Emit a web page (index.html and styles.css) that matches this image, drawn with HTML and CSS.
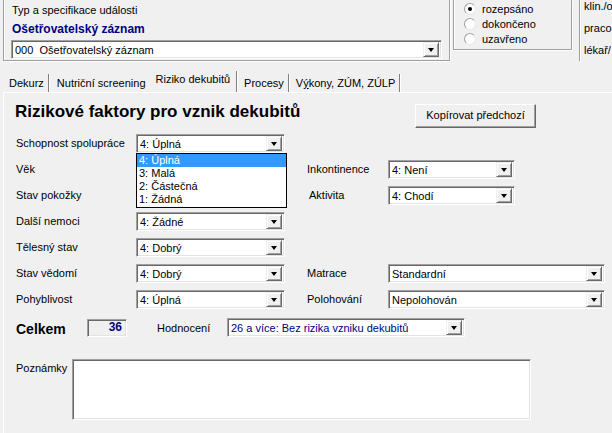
FILE: index.html
```html
<!DOCTYPE html>
<html>
<head>
<meta charset="utf-8">
<link rel="stylesheet" href="styles.css">
</head>
<body>
<div class="top">
  <div class="typ">
    <div class="typ-label">Typ a specifikace události</div>
    <div class="typ-title">Ošetřovatelský záznam</div>
    <div class="combo typ-combo"><span class="val">000&nbsp; Ošetřovatelský záznam</span><span class="dbtn"></span></div>
  </div>
  <div class="vsep"></div>
  <div class="state">
    <div class="radios">
      <div class="radio"><span class="circle on"></span>rozepsáno</div>
      <div class="radio"><span class="circle"></span>dokončeno</div>
      <div class="radio"><span class="circle"></span>uzavřeno</div>
    </div>
  </div>
  <div class="vsep"></div>
  <div class="meta">
    <div class="m1">klin./o</div>
    <div class="m2">praco</div>
    <div class="m3">lékař/</div>
  </div>
</div>

<div class="tabs">
  <div class="tab t1">Dekurz</div>
  <div class="tab t2">Nutriční screening</div>
  <div class="tab active">Riziko dekubitů</div>
  <div class="tab t4">Procesy</div>
  <div class="tab t5">V<u>ý</u>kony, ZÚM, ZÚLP</div>
</div>

<div class="panel">
  <div class="head">
    <h1>Rizikové faktory pro vznik dekubitů</h1>
    <div class="button">Kopírovat předchozí</div>
  </div>

  <div class="rows">
    <div class="row">
      <div class="lab">Schopnost spolupráce</div>
      <div class="combo w147 open"><span class="val">4: Úplná</span><span class="dbtn"></span>
        <div class="list">
          <div class="item sel">4: Úplná</div>
          <div class="item">3: Malá</div>
          <div class="item">2: Částečná</div>
          <div class="item">1: Žádná</div>
        </div>
      </div>
    </div>
    <div class="row">
      <div class="lab">Věk</div>
      <div class="combo w147 under"><span class="dbtn"></span></div>
      <div class="rlab">Inkontinence</div>
      <div class="combo w127"><span class="val">4: Není</span><span class="dbtn"></span></div>
    </div>
    <div class="row">
      <div class="lab">Stav pokožky</div>
      <div class="combo w147 under"><span class="dbtn"></span></div>
      <div class="rlab ind">Aktivita</div>
      <div class="combo w127"><span class="val">4: Chodí</span><span class="dbtn"></span></div>
    </div>
    <div class="row">
      <div class="lab">Další nemoci</div>
      <div class="combo w147"><span class="val">4: Žádné</span><span class="dbtn"></span></div>
    </div>
    <div class="row">
      <div class="lab">Tělesný stav</div>
      <div class="combo w147"><span class="val">4: Dobrý</span><span class="dbtn"></span></div>
    </div>
    <div class="row">
      <div class="lab">Stav vědomí</div>
      <div class="combo w147"><span class="val">4: Dobrý</span><span class="dbtn"></span></div>
      <div class="rlab">Matrace</div>
      <div class="combo w216"><span class="val">Standardní</span><span class="dbtn"></span></div>
    </div>
    <div class="row">
      <div class="lab">Pohyblivost</div>
      <div class="combo w147"><span class="val">4: Úplná</span><span class="dbtn"></span></div>
      <div class="rlab">Polohování</div>
      <div class="combo w216"><span class="val">Nepolohován</span><span class="dbtn"></span></div>
    </div>
  </div>

  <div class="total">
    <div class="celkem">Celkem</div>
    <div class="score">36</div>
    <div class="hlab">Hodnocení</div>
    <div class="combo w237 navy"><span class="val">26 a více: Bez rizika vzniku dekubitů</span><span class="dbtn"></span></div>
  </div>

  <div class="notes">
    <div class="nlab">Poznámky</div>
    <div class="memo"></div>
  </div>
</div>
</body>
</html>
```

FILE: styles.css
```css
* { box-sizing: border-box; }
html, body {
  margin: 0;
  padding: 0;
  width: 612px;
  height: 433px;
  overflow: hidden;
  background: #f0f0f0;
  font-family: "Liberation Sans", Arial, sans-serif;
  font-size: 11px;
  color: #000;
}

/* ---------- top area ---------- */
.top {
  display: flex;
  height: 62px;
}
.typ {
  flex: none;
  width: 446px;
  margin-left: 3px;
  height: 61px;
  border-left: 1px solid #a0a0a0;
  border-bottom: 1px solid #a0a0a0;
  box-shadow: 1px 1px 0 #fff, inset 1px 0 0 #fff;
  padding: 3px 0 0 8px;
}
.typ-label { height: 14px; line-height: 14px; }
.typ-title {
  font-weight: bold;
  font-size: 12px;
  color: #000080;
  height: 21px;
  line-height: 20px;
  margin-top: 2px;
}
.typ-combo { width: 431px; height: 20px; margin-left: -1px; }

.vsep {
  width: 2px;
  height: 61px;
  border-left: 1px solid #a0a0a0;
  border-right: 1px solid #fff;
  flex: none;
}
.state {
  flex: none;
  width: 128px;
  padding-left: 2px;
}
.radios {
  width: 119px;
  height: 50px;
  border: 1px solid #a0a0a0;
  border-top: none;
  box-shadow: 1px 1px 0 #fff, inset 1px 0 0 #fff;
  padding: 1px 0 0 10px;
}
.radio {
  height: 15px;
  display: flex;
  align-items: center;
  gap: 6px;
}
.circle {
  width: 12px;
  height: 12px;
  border-radius: 50%;
  background: #fff;
  border: 1px solid #a0a0a0;
  border-right-color: #e8e8e8;
  border-bottom-color: #e8e8e8;
  position: relative;
  flex: none;
}
.circle.on::after {
  content: "";
  position: absolute;
  left: 3px;
  top: 3px;
  width: 4px;
  height: 4px;
  border-radius: 50%;
  background: #000;
}
.meta {
  flex: 1;
  min-width: 0;
  padding-left: 3px;
  white-space: nowrap;
}
.meta .m1 { line-height: 12px; margin-top: 0; }
.meta .m2 { margin-top: 10px; }
.meta .m3 { margin-top: 10px; }

/* ---------- tabs ---------- */
.tabs {
  display: flex;
  margin-top: 9px;
  height: 21px;
  padding-left: 3px;
}
.tab {
  padding: 3px 4px 0 6px;
  height: 18px;
  border-right: 1px solid #808080;
  box-shadow: 1px 0 0 #fff;
  margin-top: 3px;
  white-space: nowrap;
}
.t1 { margin-right: 2px; }
.t2 { border-right: none; box-shadow: none; padding-right: 4px; }
.tab.active {
  padding: 2px 6px 0 6px;
  margin-top: 0;
  height: 21px;
  margin-right: 1px;
}
.t4 { margin-right: 1px; }
.tab u { text-decoration: underline; }

/* ---------- panel ---------- */
.panel {
  margin-left: 3px;
  height: 342px;
  border-top: 1px solid #fff;
  border-left: 1px solid #fff;
  border-bottom: 1px solid #fff;
  padding-left: 12px;
}
.head {
  display: flex;
  align-items: flex-start;
  height: 37px;
}
h1 {
  margin: 9px 0 0 -1px;
  font-size: 17px;
  line-height: 20px;
  font-weight: bold;
  width: 400px;
}
.button {
  margin-top: 11px;
  width: 121px;
  height: 24px;
  line-height: 21px;
  text-align: center;
  background: #f0f0f0;
  border: 1px solid #fff;
  border-right-color: #696969;
  border-bottom-color: #696969;
  box-shadow: inset -1px -1px 0 #a0a0a0;
}

.rows { display: flex; flex-direction: column; }
.row {
  display: flex;
  align-items: center;
  height: 26px;
}
.lab { width: 120px; flex: none; }
.rlab { width: 81px; margin-left: 22px; flex: none; }
.rlab.ind { padding-left: 2px; }

/* combo box */
.combo {
  position: relative;
  display: flex;
  align-items: center;
  height: 19px;
  background: #fff;
  border: 1px solid #a0a0a0;
  border-right-color: #fff;
  border-bottom-color: #fff;
  box-shadow: inset 1px 1px 0 #696969, inset -1px -1px 0 #e3e3e3;
  padding: 0 2px 0 3px;
  flex: none;
}
.combo .val { flex: 1; white-space: nowrap; overflow: hidden; padding-top: 1px; }
.dbtn {
  margin-left: auto;
  width: 16px;
  height: 15px;
  background: #f0f0f0;
  border: 1px solid #f0f0f0;
  border-right-color: #696969;
  border-bottom-color: #696969;
  box-shadow: inset 1px 1px 0 #fff, inset -1px -1px 0 #a0a0a0;
  position: relative;
  flex: none;
}
.dbtn::after {
  content: "";
  position: absolute;
  left: 4px;
  top: 5px;
  border-left: 3.5px solid transparent;
  border-right: 3.5px solid transparent;
  border-top: 4px solid #000;
}
.w147 { width: 149px; }
.w127 { width: 127px; }
.w216 { width: 217px; }
.w237 { width: 238px; }
.navy .val { color: #000080; }

.list {
  position: absolute;
  left: -1px;
  top: 18px;
  width: 151px;
  background: #fff;
  border: 1px solid #000;
  z-index: 5;
  padding-bottom: 1px;
}
.item {
  height: 13px;
  line-height: 13px;
  padding-left: 2px;
}
.item.sel { background: #3399ff; color: #fff; }

/* ---------- total ---------- */
.total {
  display: flex;
  align-items: center;
  height: 19px;
  margin-top: 6px;
}
.celkem {
  font-weight: bold;
  font-size: 14px;
  width: 71px;
  flex: none;
  padding-top: 3px;
}
.score {
  width: 40px;
  height: 18px;
  border: 1px solid #a0a0a0;
  border-right-color: #fff;
  border-bottom-color: #fff;
  box-shadow: inset 1px 1px 0 #696969, inset -1px -1px 0 #e3e3e3;
  text-align: right;
  padding-right: 4px;
  font-weight: bold;
  font-size: 12px;
  line-height: 15px;
  color: #000080;
}
.hlab { width: 70px; margin-left: 30px; }

/* ---------- notes ---------- */
.notes {
  display: flex;
  margin-top: 22px;
}
.nlab { width: 56px; padding-top: 3px; }
.memo {
  width: 459px;
  height: 61px;
  background: #fff;
  border: 1px solid #a0a0a0;
  border-right-color: #fff;
  border-bottom-color: #fff;
  box-shadow: inset 1px 1px 0 #696969, inset -1px -1px 0 #e3e3e3;
}
```
